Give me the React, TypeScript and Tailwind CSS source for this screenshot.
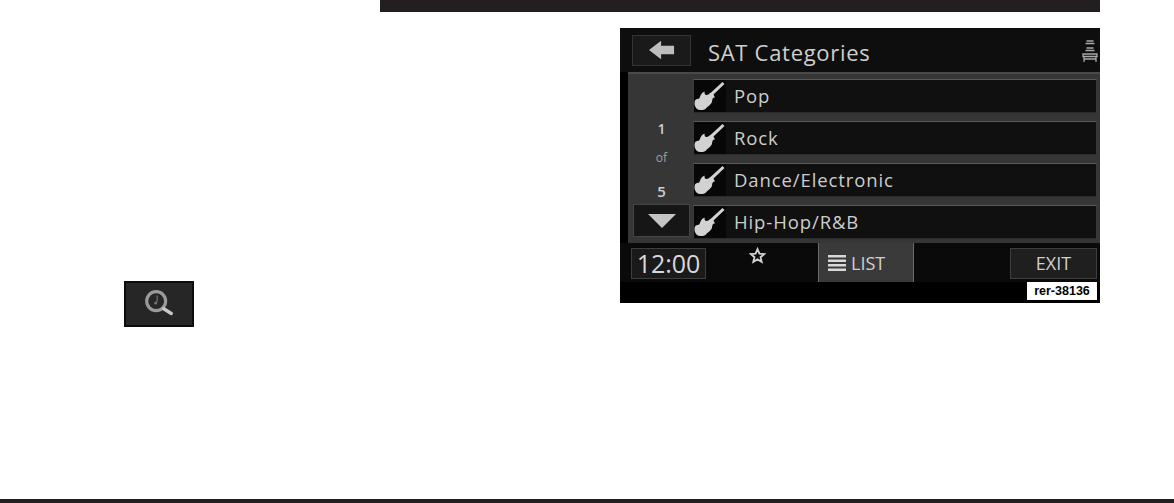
const categories = ["Pop", "Rock", "Dance/Electronic", "Hip-Hop/R&B"];

const Guitar = () => (
  <svg viewBox="0 0 32 30" className="h-[30px] w-[32px]" fill="#d2d2d2">
    <path d="M28.5 1 L30.5 3 L19.5 13.5 L21 16.5 C18.5 16.5 18.5 18 18 20.5 C17.5 23.5 14 25 12 27.5 C9.5 29.8 4.5 29.5 2.5 27.5 C0.5 25.5 0 22 1 19.5 C2 17.5 4.5 18.5 5.5 17 C6.5 15 7 12 10.5 10.5 C10.5 13 11 14 12.5 14 C14 14 15.5 12.5 17 11.5 Z" />
  </svg>
);

const Row = ({ name }: { name: string }) => (
  <div className="flex h-[34px] items-center border border-[#3a3a3a] border-t-[#5a5a5a] border-b-[#2a2a2a] bg-[#101010]">
    <div className="flex h-full w-[32px] items-center justify-center bg-[#070707]">
      <Guitar />
    </div>
    <span className="mb-[1px] ml-[8px] text-[18.5px] font-medium tracking-[0.9px] text-[#cdcdcd]">{name}</span>
  </div>
);

const Magnifier = () => (
  <svg viewBox="0 0 40 36" className="h-[34px] w-[38px]" fill="none">
    <circle cx="17" cy="15" r="10" stroke="#9a9a9a" strokeWidth="3.4" />
    <path d="M25 23 L33 28" stroke="#c8c8c8" strokeWidth="3.6" strokeLinecap="round" />
    <path d="M18 9 V16" stroke="#777777" strokeWidth="1.2" />
    <circle cx="16.5" cy="17" r="1.6" fill="#777777" />
  </svg>
);

const Seat = () => (
  <svg viewBox="0 0 16 24" className="h-[24px] w-[16px]" fill="none" stroke="#a8a8a8">
    <path d="M4.5 2 H11.5 M3.5 4.5 H12.5" strokeWidth="1.6" />
    <path d="M4.5 9 H11.5 M3.5 11.5 H12.5" strokeWidth="1.6" />
    <path d="M1 15 H15 V17.5 H1 Z M2 17.5 V23 M14 17.5 V23 M2 20 H14" strokeWidth="1.3" />
  </svg>
);

export default function App() {
  return (
    <div className="flex h-[503px] flex-col bg-white font-['Open_Sans',sans-serif]">
      <div className="ml-[380px] h-[12px] w-[720px] bg-[#231f20]" />

      <div className="flex flex-1">
        <div className="w-[620px] pl-[124px] pt-[269px]">
          <div className="flex h-[46px] w-[70px] items-center justify-center border-2 border-[#0c0c0c] bg-[#262626]">
            <Magnifier />
          </div>
        </div>

        <div className="mt-[16px] flex h-[275px] w-[480px] flex-col bg-black">
          {/* header */}
          <div className="flex h-[44px] items-center bg-[#0e0e0e] pl-[12px] pr-[2px]">
            <div className="flex h-[31px] w-[59px] items-center justify-center border border-[#333333] bg-[#1a1a1a]">
              <svg viewBox="0 0 28 20" className="h-[20px] w-[26px]" fill="#bdbdbd">
                <path d="M0 10 L13 0 V5.5 H27 V14.5 H13 V20 Z" />
              </svg>
            </div>
            <span className="ml-[17px] mt-[3px] text-[22px] font-medium leading-none tracking-[0.7px] text-[#cfcfcf]">SAT Categories</span>
            <div className="ml-auto mt-[2px]">
              <Seat />
            </div>
          </div>

          {/* list panel */}
          <div className="ml-[8px] flex h-[171px] border-t-2 border-[#4a4a4a] bg-[#363636]">
            <div className="flex w-[65px] flex-col items-center pl-[2px] text-[#cfcfcf]">
              <span className="mt-[45px] text-[14px] font-semibold leading-[20px]">1</span>
              <span className="mt-[11px] text-[12px] leading-[16px] text-[#a0a0a0]">of</span>
              <span className="mt-[15px] text-[15px] font-semibold leading-[20px]">5</span>
              <div className="mt-[3px] flex h-[33px] w-[57px] items-center justify-center border border-[#444444] bg-[#161616]">
                <svg viewBox="0 0 28 16" className="h-[16px] w-[28px]" fill="#c4c4c4">
                  <path d="M0 1 H28 L14 15 Z" />
                </svg>
              </div>
            </div>
            <div className="flex w-[404px] flex-col gap-[8px] pt-[5px]">
              {categories.map((c) => (
                <Row key={c} name={c} />
              ))}
            </div>
          </div>

          {/* footer */}
          <div className="flex h-[39px] items-start bg-[#0a0a0a]">
            <div className="ml-[11px] mt-[5px] flex h-[31px] w-[75px] items-center justify-center border border-[#3e3e3e] bg-[#1a1a1a] text-[25px] leading-none text-[#d8d8d8]">
              12:00
            </div>
            <svg viewBox="0 0 24 24" className="ml-[43px] mt-[4px] h-[17px] w-[17px]" fill="none" stroke="#d2d2d2" strokeWidth="2.6">
              <path d="M12 3 L14.7 9.3 L21.5 9.9 L16.3 14.4 L17.9 21 L12 17.5 L6.1 21 L7.7 14.4 L2.5 9.9 L9.3 9.3 Z" />
            </svg>
            <div className="ml-[52px] flex h-[39px] w-[96px] items-center gap-[5px] border-l border-r border-[#6a6a6a] bg-[#3a3a3a] pl-[9px] pt-[1px]">
              <svg viewBox="0 0 18 16" className="h-[16px] w-[18px]" fill="#d8d8d8">
                <path d="M0 0 H18 V2.4 H0 Z M0 4.5 H18 V6.9 H0 Z M0 9 H18 V11.4 H0 Z M0 13.5 H18 V15.9 H0 Z" />
              </svg>
              <span className="text-[18px] font-medium text-[#d0d0d0]">LIST</span>
            </div>
            <div className="ml-[96px] mt-[5px] flex h-[31px] w-[87px] items-center justify-center border border-[#3e3e3e] bg-[#1f1f1f] text-[18px] font-medium text-[#d0d0d0]">
              EXIT
            </div>
          </div>

          <div className="flex justify-end pr-[3px]">
            <div className="flex h-[18px] w-[70px] items-center justify-center bg-white font-['Liberation_Sans',sans-serif] text-[12.5px] font-bold text-black">
              rer-38136
            </div>
          </div>
        </div>
      </div>

      <div className="h-[4px] bg-[#231f20]" />
    </div>
  );
}
